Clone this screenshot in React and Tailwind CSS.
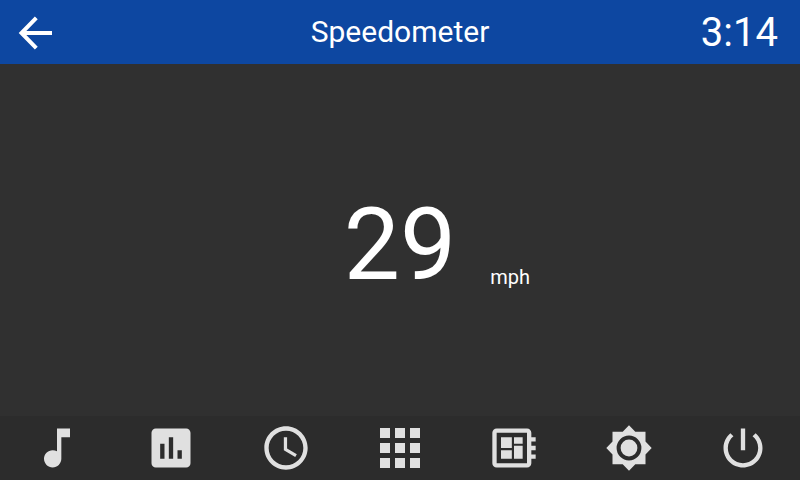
const icons = {
  music: 'M12 3v10.55c-.59-.34-1.27-.55-2-.55-2.21 0-4 1.79-4 4s1.79 4 4 4 4-1.79 4-4V7h4V3h-6z',
  stats: 'M19 3H5c-1.1 0-2 .9-2 2v14c0 1.1.9 2 2 2h14c1.1 0 2-.9 2-2V5c0-1.1-.9-2-2-2zM9 17H7v-7h2v7zm4 0h-2V7h2v10zm4 0h-2v-4h2v4z',
  clock: 'M11.99 2C6.47 2 2 6.48 2 12s4.47 10 9.99 10C17.52 22 22 17.52 22 12S17.52 2 11.99 2zM12 20c-4.42 0-8-3.58-8-8s3.58-8 8-8 8 3.58 8 8-3.58 8-8 8zM12.5 7H11v6l5.25 3.15.75-1.23-4.5-2.67z',
  board: 'M22 9V7h-2V5c0-1.1-.9-2-2-2H4c-1.1 0-2 .9-2 2v14c0 1.1.9 2 2 2h14c1.1 0 2-.9 2-2v-2h2v-2h-2v-2h2v-2h-2V9h2zm-4 10H4V5h14v14zM6 13h5v4H6zm6-6h4v3h-4zM6 7h5v5H6zm6 4h4v6h-4z',
  power: 'M13 3h-2v10h2V3zm4.83 2.17l-1.42 1.42C17.99 7.86 19 9.81 19 12c0 3.87-3.13 7-7 7s-7-3.13-7-7c0-2.19 1.01-4.14 2.58-5.42L6.17 5.17C4.23 6.82 3 9.26 3 12c0 4.97 4.03 9 9 9s9-4.03 9-9c0-2.74-1.23-5.18-3.17-6.83z',
};

function Icon({ d }) {
  return (
    <svg viewBox="0 0 24 24" className="size-[52px]" fill="currentColor" aria-hidden="true">
      <path d={d} />
    </svg>
  );
}

function AppsIcon() {
  return (
    <svg viewBox="0 0 52 52" className="size-[52px]" fill="currentColor" shapeRendering="crispEdges" aria-hidden="true">
      {[6, 21, 36].map((y) => [6, 21, 36].map((x) => <rect key={`${x}-${y}`} x={x} y={y} width="10" height="10" />))}
    </svg>
  );
}

function BrightnessIcon() {
  return (
    <svg viewBox="0 0 52 52" className="size-[52px]" fill="currentColor" fillRule="evenodd" aria-hidden="true">
      <path d="M42.500 19.600V9.800h-10.200L26 3.200l-6.300 6.600H9.500v9.800L3.300 26l6.200 6.400v9.800h10.200L26 48.800l6.300-6.600h10.200v-9.800l6.200-6.400zM26 38.400a12.400 12.400 0 1 1 0-24.800 12.400 12.400 0 0 1 0 24.800z" />
      <circle cx="26" cy="26" r="8.400" />
    </svg>
  );
}

const items = [
  { label: 'Media', icon: <Icon d={icons.music} /> },
  { label: 'Statistics', icon: <Icon d={icons.stats} /> },
  { label: 'Clock', icon: <Icon d={icons.clock} /> },
  { label: 'Applications', icon: <AppsIcon /> },
  { label: 'Board', icon: <Icon d={icons.board} /> },
  { label: 'Brightness', icon: <BrightnessIcon /> },
  { label: 'Power', icon: <Icon d={icons.power} /> },
];

export default function App() {
  return (
    <div className="flex min-h-screen flex-col bg-[#303030] font-[Roboto,sans-serif] text-white">
      <header className="grid h-16 grid-cols-[1fr_auto_1fr] items-center bg-[#0d47a1] px-[10px]">
        <button type="button" aria-label="Back" className="size-[50px]">
          <svg viewBox="0 0 50 50" className="size-[50px]" fill="none" stroke="currentColor" strokeWidth="4" aria-hidden="true">
            <path d="M42 26H12M26.300 10.800L11.500 26l14.800 15.200" />
          </svg>
        </button>
        <h1 className="text-[30px] leading-9">Speedometer</h1>
        <time className="justify-self-end pt-0.5 pr-3 text-[40px] leading-[48px]">3:14</time>
      </header>
      <main className="grid flex-1 grid-cols-[1fr_auto_1fr] content-center items-end pt-2.5">
        <span className="col-start-2 text-[100px] leading-[120px]">29</span>
        <span className="pb-4 pl-[34px] text-[20px] leading-6">mph</span>
      </main>
      <nav className="grid h-16 grid-cols-7 bg-[#2c2c2c] text-[#e0e0e0]">
        {items.map(({ label, icon }) => (
          <button key={label} type="button" aria-label={label} className="flex items-center justify-center">
            {icon}
          </button>
        ))}
      </nav>
    </div>
  );
}
